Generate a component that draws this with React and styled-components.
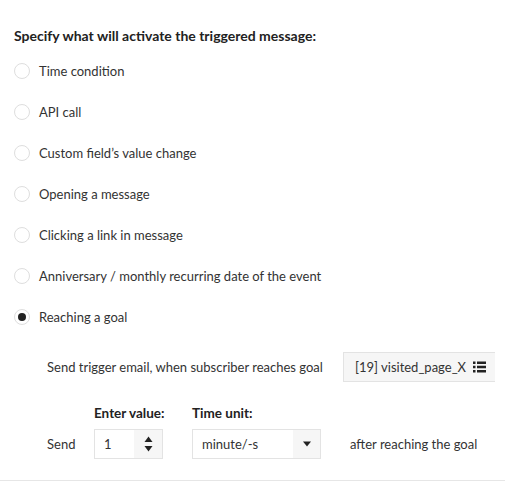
import React, { useState } from "react";
import styled, { createGlobalStyle } from "styled-components";

const options = [
  "Time condition",
  "API call",
  "Custom field’s value change",
  "Opening a message",
  "Clicking a link in message",
  "Anniversary / monthly recurring date of the event",
  "Reaching a goal"
];

const GlobalStyle = createGlobalStyle`
  body {
    margin: 0;
    background: #fff;
    font-family: "Lato", "Open Sans", sans-serif;
    font-size: 13px;
    color: #333;
  }
`;

const ListIcon = () => (
  <svg width="13" height="12" viewBox="0 0 13 12">
    <rect x="0" y="0.5" width="2.5" height="2.5" fill="#222" />
    <rect x="4" y="0.5" width="9" height="2.5" fill="#222" />
    <rect x="0" y="4.75" width="2.5" height="2.5" fill="#222" />
    <rect x="4" y="4.75" width="9" height="2.5" fill="#222" />
    <rect x="0" y="9" width="2.5" height="2.5" fill="#222" />
    <rect x="4" y="9" width="9" height="2.5" fill="#222" />
  </svg>
);

const SpinIcon = () => (
  <svg width="9" height="16" viewBox="0 0 9 16">
    <path d="M4.5 0.5 L8.5 6 L0.5 6 Z" fill="#222" />
    <path d="M0.5 10 L8.5 10 L4.5 15.5 Z" fill="#222" />
  </svg>
);

const CaretIcon = () => (
  <svg width="8" height="6" viewBox="0 0 8 6">
    <path d="M0 0.5 L8 0.5 L4 5.5 Z" fill="#222" />
  </svg>
);

const App = () => {
  const [selected, setSelected] = useState(6);

  return (
    <>
      <GlobalStyle />
      <Wrapper>
        <Heading>Specify what will activate the triggered message:</Heading>
        <OptionList>
          {options.map((label, index) => (
            <Option key={label} onClick={() => setSelected(index)}>
              <Radio checked={selected === index} />
              {label}
            </Option>
          ))}
        </OptionList>

        <GoalRow>
          <GoalLabel>Send trigger email, when subscriber reaches goal</GoalLabel>
          <GoalPicker>
            [19] visited_page_X
            <ListIcon />
          </GoalPicker>
        </GoalRow>

        <DelayGrid>
          <span />
          <FieldLabel>Enter value:</FieldLabel>
          <FieldLabel>Time unit:</FieldLabel>
          <span />

          <span>Send</span>
          <Field width={69}>
            <FieldValue>1</FieldValue>
            <AddOn width={28}>
              <SpinIcon />
            </AddOn>
          </Field>
          <Field width={129}>
            <FieldValue>minute/-s</FieldValue>
            <AddOn width={27}>
              <CaretIcon />
            </AddOn>
          </Field>
          <span>after reaching the goal</span>
        </DelayGrid>
      </Wrapper>
    </>
  );
};

const Wrapper = styled.div`
  padding: 26px 0 21px 14px;
  border-bottom: 1px solid #e6e6e6;
  width: 491px;
`;

const Heading = styled.h3`
  margin: 0 0 4px;
  font-size: 14px;
  font-weight: 700;
  line-height: 20px;
  color: #222;
`;

const OptionList = styled.div`
  display: flex;
  flex-direction: column;
`;

const Option = styled.label`
  display: flex;
  align-items: center;
  gap: 9px;
  height: 41px;
  cursor: pointer;
`;

const Radio = styled.span`
  box-sizing: border-box;
  width: 16px;
  height: 16px;
  border-radius: 50%;
  border: 1px solid #dedede;
  background: #fff;
  display: grid;
  place-items: center;

  &::after {
    content: "";
    width: 8px;
    height: 8px;
    border-radius: 50%;
    background: #222;
    display: ${p => (p.checked ? "block" : "none")};
  }
`;

const GoalRow = styled.div`
  display: flex;
  align-items: center;
  margin-top: 15px;
  padding-left: 33px;
  height: 30px;
`;

const GoalLabel = styled.span`
  flex: 0 0 296px;
  white-space: nowrap;
`;

const GoalPicker = styled.div`
  box-sizing: border-box;
  display: flex;
  align-items: center;
  justify-content: space-between;
  width: 152px;
  height: 30px;
  padding: 0 9px 0 11px;
  background: #f6f6f6;
  border: 1px solid #e3e3e3;
  border-right: none;
  color: #333;
`;

const DelayGrid = styled.div`
  display: grid;
  grid-template-columns: 47px 98px 158px auto;
  row-gap: 6px;
  align-items: center;
  margin-top: 21px;
  padding-left: 33px;
  white-space: nowrap;
`;

const FieldLabel = styled.div`
  font-weight: 700;
  font-size: 13.5px;
  line-height: 20px;
  color: #222;
`;

const Field = styled.div`
  box-sizing: border-box;
  display: flex;
  width: ${p => p.width}px;
  height: 30px;
  border: 1px solid #e3e3e3;
  background: #fff;
`;

const FieldValue = styled.div`
  flex: 1;
  display: flex;
  align-items: center;
  padding-left: 9px;
`;

const AddOn = styled.div`
  width: ${p => p.width}px;
  background: #f6f6f6;
  display: grid;
  place-items: center;
`;

export default App;
